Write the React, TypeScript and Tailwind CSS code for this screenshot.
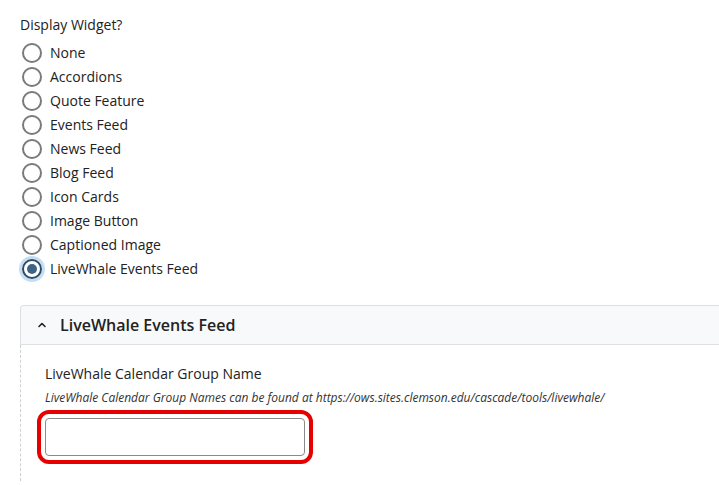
import { useState } from 'react';

const options = [
  'None',
  'Accordions',
  'Quote Feature',
  'Events Feed',
  'News Feed',
  'Blog Feed',
  'Icon Cards',
  'Image Button',
  'Captioned Image',
  'LiveWhale Events Feed',
];

export default function App() {
  const [selected, setSelected] = useState('LiveWhale Events Feed');

  return (
    <div className="min-h-screen bg-white overflow-hidden pl-5 pt-[15px] text-[#222] font-['Open_Sans',sans-serif]">
      <div className="text-[14px] leading-5">Display Widget?</div>

      {/* Widget radios */}
      <div className="mt-[6px] ml-[2px] flex flex-col">
        {options.map((opt) => {
          const on = opt === selected;
          return (
            <label key={opt} className="flex items-center h-6 gap-2 cursor-pointer" onClick={() => setSelected(opt)}>
              <span
                className={`w-5 h-5 rounded-full flex items-center justify-center shrink-0 ${
                  on
                    ? 'border-2 border-[#2d4a66] shadow-[0_0_0_3px_#c4def5]'
                    : 'border-2 border-[#7a7a7a]'
                }`}
              >
                {on && <span className="w-[10px] h-[10px] rounded-full bg-[#3d6387]" />}
              </span>
              <span className="text-[14px] leading-5">{opt}</span>
            </label>
          );
        })}
      </div>

      {/* Accordion panel */}
      <div className="mt-6 -mr-4">
        <div className="h-[40px] flex items-center bg-[#f8f9fa] border border-[#dcdfe3] rounded-tl-[3px] pl-[16px]">
          <svg width="10" height="10" viewBox="0 0 10 10" className="text-[#222]">
            <path d="M2 6.5 L5 3.5 L8 6.5" fill="none" stroke="currentColor" strokeWidth="1.6" strokeLinecap="round" strokeLinejoin="round" />
          </svg>
          <span className="ml-[13px] text-[16px] font-semibold leading-6">LiveWhale Events Feed</span>
        </div>
        <div className="border-l border-dashed border-[#cfcfcf] pl-6 pt-[19px] pb-[25px]">
          <div className="text-[14px] leading-5">LiveWhale Calendar Group Name</div>
          <div className="mt-[4px] text-[12px] italic leading-5 text-[#333]">
            LiveWhale Calendar Group Names can be found at https://ows.sites.clemson.edu/cascade/tools/livewhale/
          </div>
          <input
            type="text"
            className="mt-[10px] block w-[260px] h-[38px] border border-[#8a8a8a] rounded-[4px] bg-white outline-4 outline-solid outline-offset-[4px] outline-[#e60000]"
          />
        </div>
      </div>
    </div>
  );
}
